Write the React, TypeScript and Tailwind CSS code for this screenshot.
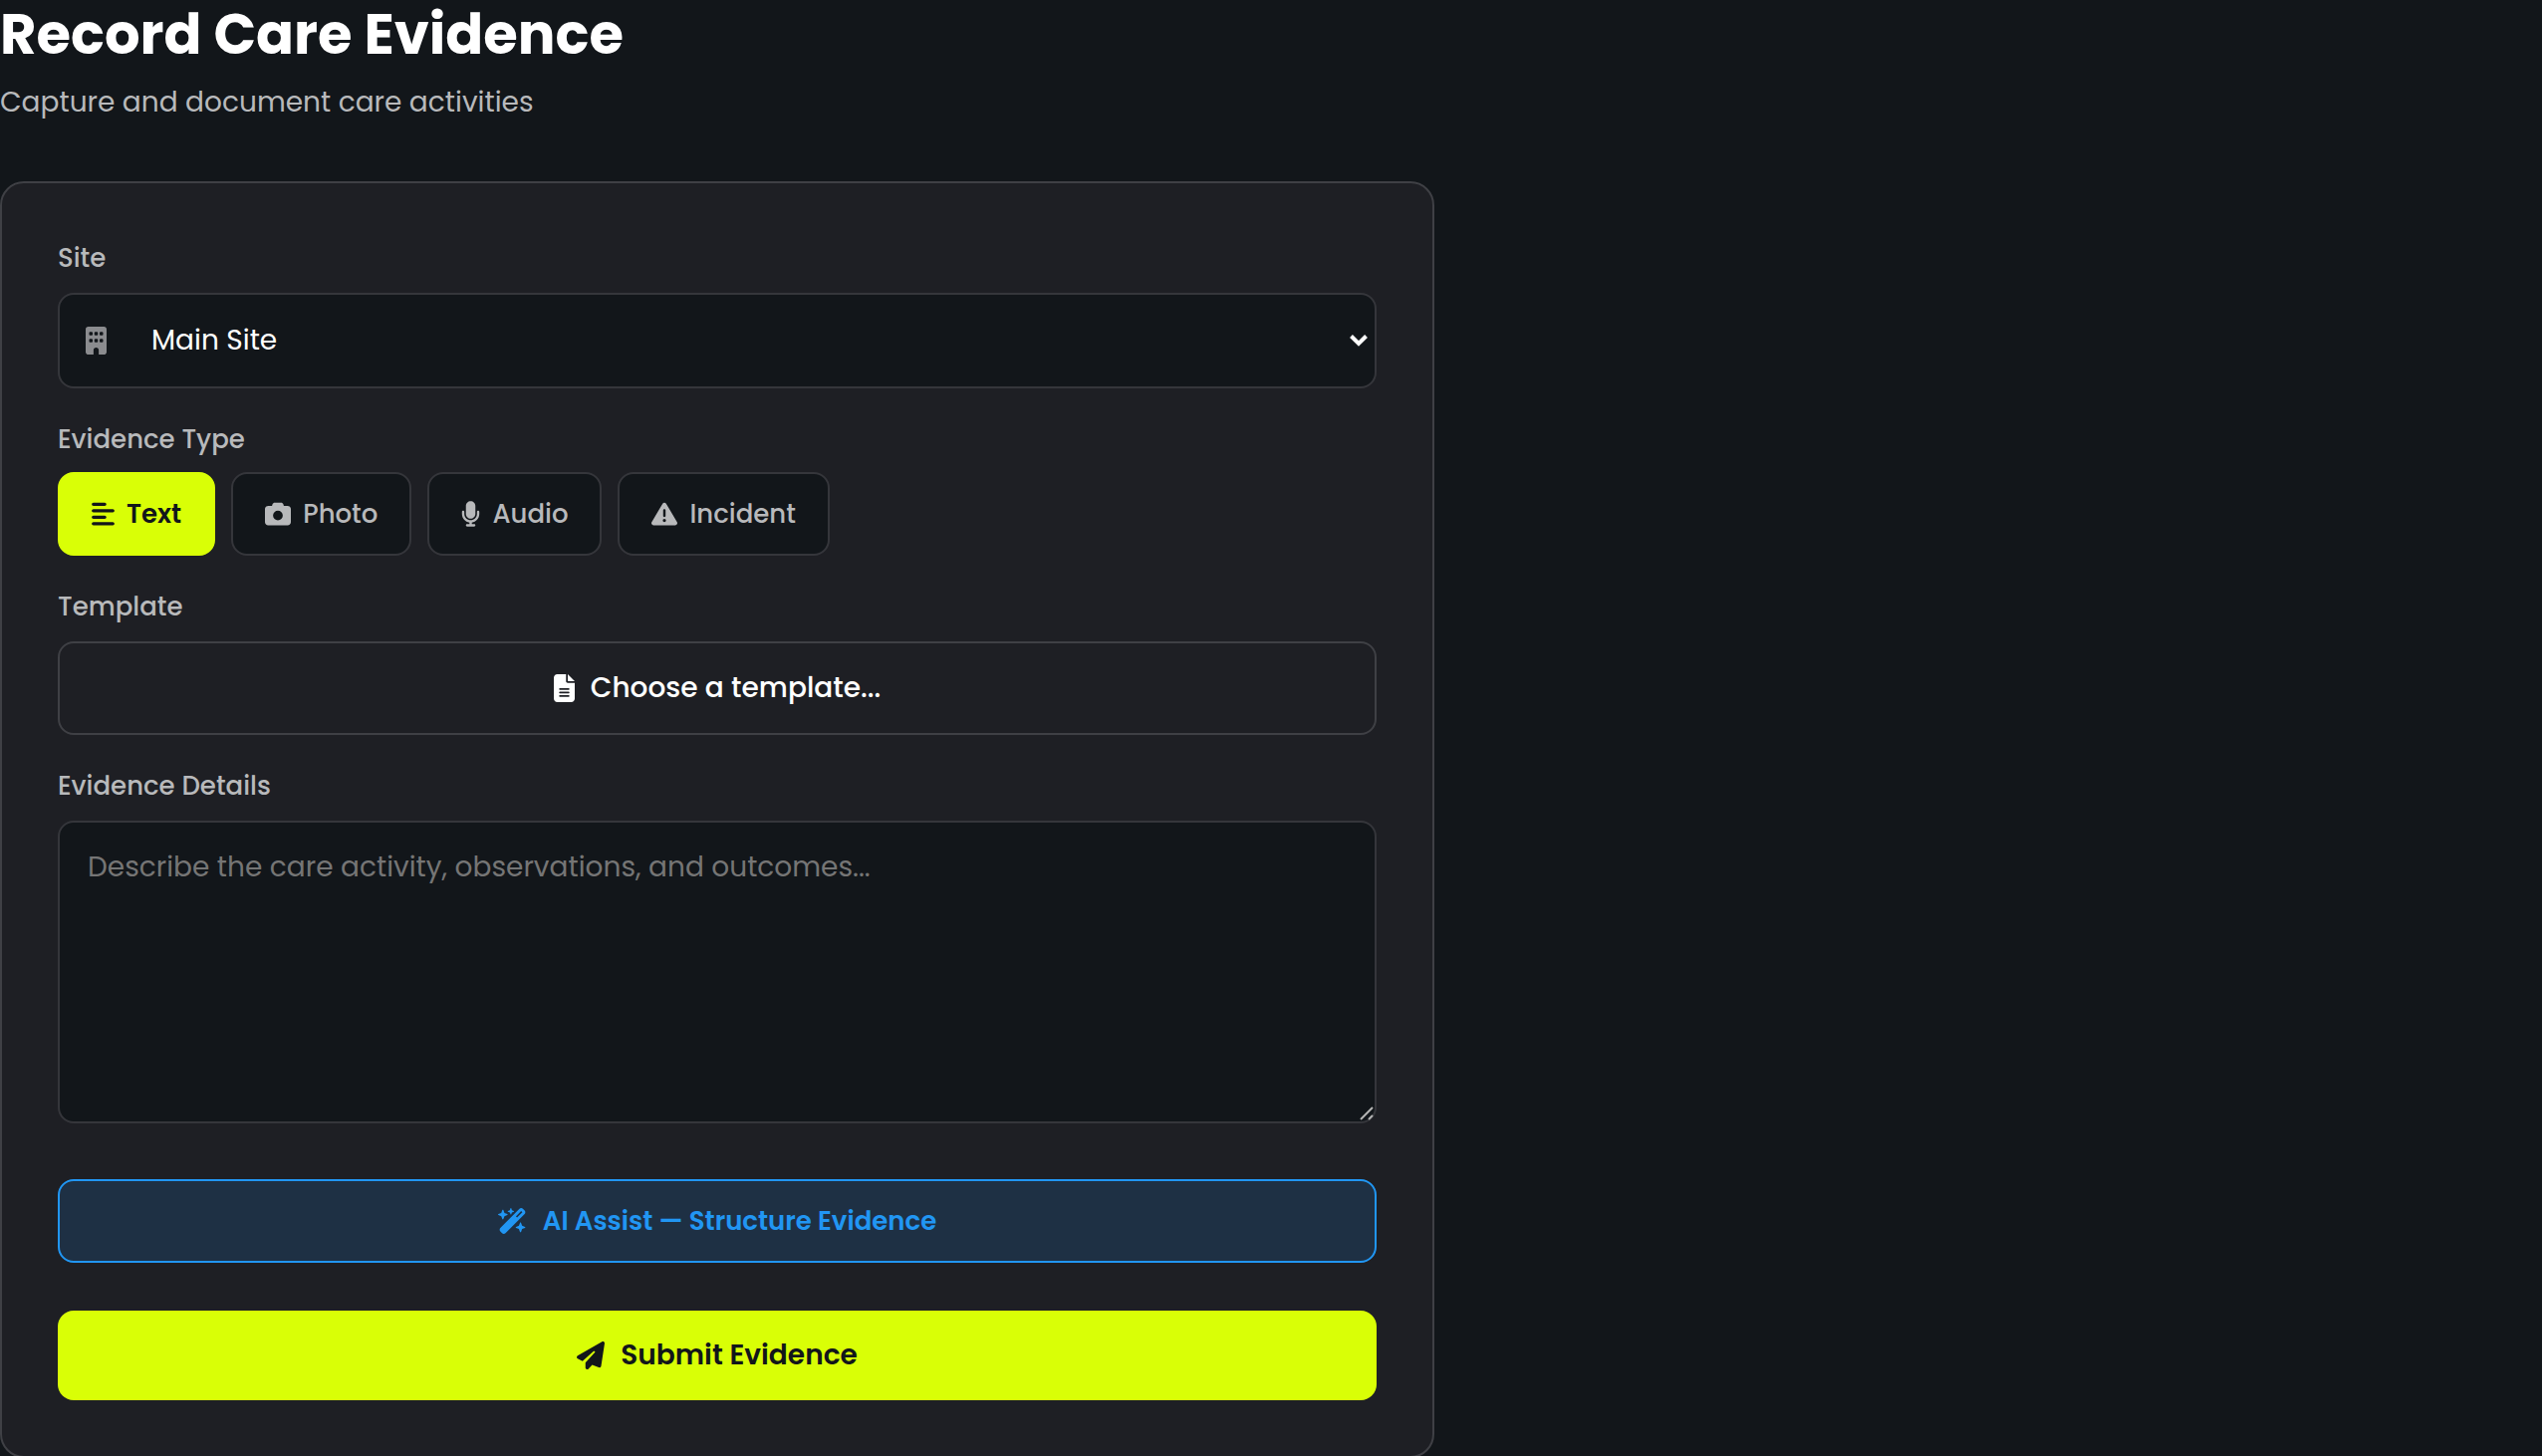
import { useState } from "react";
import type { IconType } from "react-icons";
import {
  FaAlignLeft,
  FaBuilding,
  FaCamera,
  FaFileLines,
  FaMicrophone,
  FaPaperPlane,
  FaTriangleExclamation,
  FaWandMagicSparkles,
} from "react-icons/fa6";

const evidenceTypes: { name: string; Icon: IconType; iconWidth: string }[] = [
  { name: "Text", Icon: FaAlignLeft, iconWidth: "w-[23px]" },
  { name: "Photo", Icon: FaCamera, iconWidth: "w-[26px]" },
  { name: "Audio", Icon: FaMicrophone, iconWidth: "w-[19px]" },
  { name: "Incident", Icon: FaTriangleExclamation, iconWidth: "w-[26px]" },
];

const labelClass = "block text-[26px] leading-[38px] font-medium text-[#b8b9bb]";

function SitePicker() {
  return (
    <div>
      <label htmlFor="site" className={labelClass}>
        Site
      </label>
      <div className="relative mt-4">
        <FaBuilding
          aria-hidden
          className="pointer-events-none absolute top-1/2 left-7 h-7 w-[21px] -translate-y-1/2 text-[#8b8c8f]"
        />
        <select
          id="site"
          className="block h-24 w-full appearance-none rounded-2xl border-2 border-[#35363b] bg-[#12161a] pr-16 pl-[92px] text-[28px] text-white"
        >
          <option>Main Site</option>
        </select>
        <svg
          aria-hidden
          viewBox="0 0 20 14"
          className="pointer-events-none absolute top-1/2 right-2 h-[14px] w-5 -translate-y-1/2"
          fill="none"
          stroke="white"
          strokeWidth="4"
        >
          <path d="M2.5 2.5 10 10l7.5-7.5" />
        </svg>
      </div>
    </div>
  );
}

function TypePicker() {
  const [selected, setSelected] = useState("Text");
  return (
    <div role="group" aria-labelledby="type-label">
      <span id="type-label" className={labelClass}>
        Evidence Type
      </span>
      <div className="mt-3.5 flex flex-wrap gap-4">
        {evidenceTypes.map(({ name, Icon, iconWidth }) => (
          <button
            key={name}
            type="button"
            aria-pressed={name === selected}
            onClick={() => setSelected(name)}
            className={
              "flex h-[84px] items-center gap-3 rounded-2xl border-2 px-8 text-[26px] " +
              (name === selected
                ? "border-[#d9ff06] bg-[#d9ff06] font-semibold text-[#12161a]"
                : "border-[#35363b] bg-[#12161a] font-medium text-[#b8b9bb]")
            }
          >
            <Icon aria-hidden className={"h-[26px] " + iconWidth} />
            {name}
          </button>
        ))}
      </div>
    </div>
  );
}

export default function App() {
  return (
    <main className="min-h-screen bg-[#12161a] font-['Poppins','Inter',sans-serif] text-white">
      <h1 className="text-[56px] leading-[70px] font-bold">Record Care Evidence</h1>
      <p className="mt-3 text-[28px] leading-[42px] text-[#b8b9bb]">
        Capture and document care activities
      </p>

      <form
        onSubmit={(e) => e.preventDefault()}
        className="mt-[58px] flex max-w-[1440px] flex-col gap-8 rounded-3xl border-2 border-[#3f4045] bg-[#1e1f24] p-14"
      >
        <SitePicker />
        <TypePicker />

        <div>
          <span id="template-label" className={labelClass}>
            Template
          </span>
          <button
            type="button"
            aria-describedby="template-label"
            className="mt-4 flex h-[94px] w-full items-center justify-center gap-4 rounded-2xl border-2 border-[#3f4045] text-[28px] font-medium"
          >
            <FaFileLines aria-hidden className="h-7 w-[21px]" />
            Choose a template...
          </button>
        </div>

        <div>
          <label htmlFor="details" className={labelClass}>
            Evidence Details
          </label>
          <div className="relative mt-4">
            <textarea
              id="details"
              placeholder="Describe the care activity, observations, and outcomes..."
              className="block h-[304px] w-full resize-none rounded-2xl border-2 border-[#35363b] bg-[#12161a] px-7 py-6 text-[28px] leading-[42px] placeholder:text-[#757575]"
            />
            <svg
              aria-hidden
              viewBox="0 0 16 16"
              className="pointer-events-none absolute right-0.5 bottom-0.5 size-4"
              stroke="#b4b4b4"
              strokeWidth="2"
            >
              <path d="M2 14 14 2M10 14l4-4" />
            </svg>
          </div>
        </div>

        <button
          type="button"
          className="mt-6 flex h-[84px] items-center justify-center gap-4 rounded-2xl border-2 border-[#2196f3] bg-[#1e3044] text-[26px] font-semibold text-[#2196f3]"
        >
          <FaWandMagicSparkles aria-hidden className="h-[26px] w-[29px]" />
          AI Assist — Structure Evidence
        </button>

        <button
          type="submit"
          className="mt-4 flex h-[90px] items-center justify-center gap-4 rounded-2xl bg-[#d9ff06] text-[28px] font-semibold text-[#12161a]"
        >
          <FaPaperPlane aria-hidden className="size-7" />
          Submit Evidence
        </button>
      </form>
    </main>
  );
}
